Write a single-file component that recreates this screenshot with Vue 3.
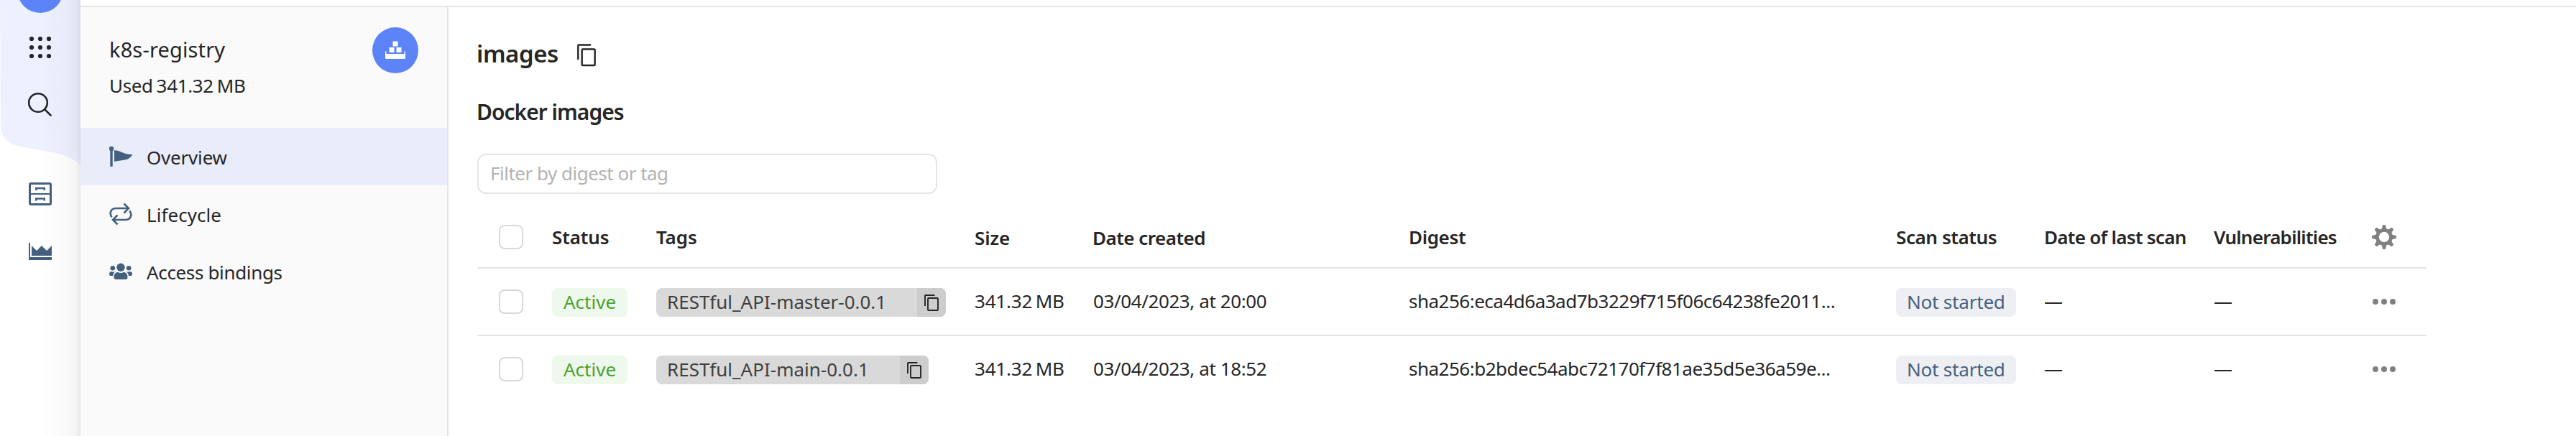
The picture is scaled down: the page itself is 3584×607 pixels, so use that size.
<script setup>
const nav = [
  { label: 'Overview', icon: 'flag', active: true },
  { label: 'Lifecycle', icon: 'cycle' },
  { label: 'Access bindings', icon: 'group' }
]
const rows = [
  { tag: 'RESTful_API-master-0.0.1', size: '341.32 MB', date: '03/04/2023, at 20:00', digest: 'sha256:eca4d6a3ad7b3229f715f06c64238fe2011...' },
  { tag: 'RESTful_API-main-0.0.1', size: '341.32 MB', date: '03/04/2023, at 18:52', digest: 'sha256:b2bdec54abc72170f7f81ae35d5e36a59e...' }
]
const teeth = [0, 45, 90, 135, 180, 225, 270, 315]
</script>

<template>
  <div class="app">
    <aside class="rail">
      <svg class="blob" width="112" height="240" viewBox="0 0 112 240">
        <path d="M0 0H112V229Q98 218 78 213L28 204Q3 199 1 177Z" fill="#edf1ff" />
        <circle cx="56" cy="-14" r="32" fill="#5c84f8" />
      </svg>
      <div class="rail-icons">
        <svg class="ri-grid" width="32" height="32" viewBox="40 50 32 32" fill="#262626">
          <template v-for="y in [54, 66, 78]" :key="y">
            <circle v-for="x in [44, 56, 68]" :key="x" :cx="x" :cy="y" r="3.1" />
          </template>
        </svg>
        <svg class="ri-search" width="36" height="36" viewBox="38 128 36 36" fill="none" stroke="#262626" stroke-width="2.6" stroke-linecap="round">
          <circle cx="53" cy="143" r="12.8" /><path d="M62.3 152.300L70.500 160.500" />
        </svg>
        <svg class="ri-drawer" width="32" height="32" viewBox="0 0 32 32" fill="none" stroke="#45607f" stroke-width="3">
          <rect x="1.500" y="1.500" width="29" height="29" rx="1.500" /><path d="M2 16H30" stroke-width="2.200" />
          <path d="M10.300 11V8H21.700V11M10.300 25.500V22.500H21.700V25.500" stroke-width="2.600" />
        </svg>
        <svg class="ri-chart" width="32" height="24" viewBox="0 0 32 24" fill="#45607f">
          <path d="M0 0H2V20H32V24H0ZM4 4L11 11L18 4L25 11L32 4V18H4Z" />
        </svg>
      </div>
      <div class="shade"></div>
    </aside>

    <div class="page">
      <div class="topbar"></div>
      <div class="body">
        <nav class="side">
          <div class="side-head">
            <div>
              <div class="reg">k8s-registry</div>
              <div class="used">Used 341.32 MB</div>
            </div>
            <div class="badge">
              <svg width="28" height="26" viewBox="0 0 28 26" fill="#fff">
                <path d="M10.500 0.500h7v7h-7zM5.500 9h7v7h-7zM15.500 9h7v7h-7zM0 14.500h1.500v3.500H26.500v-3.500H28v9a1.500 1.500 0 0 1-1.500 1.500h-25A1.500 1.500 0 0 1 0 23.500z" />
              </svg>
            </div>
          </div>
          <div v-for="n in nav" :key="n.label" class="item" :class="[n.icon, { active: n.active }]">
            <svg v-if="n.icon === 'flag'" width="32" height="32" viewBox="0 0 32 32" fill="#45607f">
              <circle cx="3" cy="5" r="3.200" /><path d="M1.300 5H4.700V29Q4.700 30 3.700 30H2.300Q1.300 30 1.300 29ZM7 7.200C17 7.500 20 13.500 32 13Q32.300 14 31 15.300C25 22.500 17 20.500 7 23Z" />
            </svg>
            <svg v-else-if="n.icon === 'cycle'" width="32" height="32" viewBox="0 0 32 32" fill="none" stroke="#45607f" stroke-width="2.600">
              <path d="M3.500 20.500C-0.500 14 2.500 8 9.500 8H27M20.500 1.500L27 8L20.500 14.500M28.500 11.500C32.500 18 29.500 24 22.500 24H5M11.500 17.500L5 24L11.500 30.500" />
            </svg>
            <svg v-else width="32" height="32" viewBox="0 0 32 32" fill="#45607f">
              <circle cx="16" cy="10.300" r="5.700" /><circle cx="4.800" cy="11.300" r="3.300" /><circle cx="27.200" cy="11.300" r="3.300" />
              <path d="M6.500 24C6.500 19 9 17 12 17Q16 19 20 17C23 17 25.500 19 25.500 24Q25.500 27 22.500 27H9.500Q6.500 27 6.500 24ZM0 20Q0 16 3 16Q5 17 8 16Q5.500 18.500 5 22H2Q0 22 0 20ZM32 20Q32 16 29 16Q27 17 24 16Q26.500 18.500 27 22H30Q32 22 32 20Z" />
            </svg>
            <span>{{ n.label }}</span>
          </div>
        </nav>

        <main class="main">
          <div class="title">
            <h1>images</h1>
            <svg width="26" height="32" viewBox="0 0 26 32" fill="none" stroke="#262626" stroke-width="2.400">
              <path d="M1.300 22V2.500Q1.300 1.500 2.300 1.500H19" /><rect x="6.700" y="7.500" width="18" height="22.500" rx="1" />
            </svg>
          </div>
          <h2>Docker images</h2>
          <div class="filter">Filter by digest or tag</div>

          <div class="table">
            <div class="row head">
              <div><i class="check"></i></div>
              <div>Status</div>
              <div>Tags</div>
              <div class="low">Size</div>
              <div class="low created">Date created</div>
              <div class="dig">Digest</div>
              <div class="scan">Scan status</div>
              <div class="last">Date of last scan</div>
              <div class="vuln">Vulnerabilities</div>
              <div>
                <svg class="gear" width="34" height="34" viewBox="-17 -17 34 34" fill="#808080">
                  <circle r="9.500" fill="none" stroke="#808080" stroke-width="4.600" />
                  <path v-for="a in teeth" :key="a" :transform="`rotate(${a})`" d="M-4.500 -10.500Q-2.600 -11.500 -2.300 -15.700Q-2.200 -17 -1 -17H1Q2.200 -17 2.300 -15.700Q2.600 -11.500 4.500 -10.500Z" />
                </svg>
              </div>
            </div>
            <div v-for="r in rows" :key="r.tag" class="row">
              <div><i class="check"></i></div>
              <div><span class="chip ok">Active</span></div>
              <div>
                <span class="tag">
                  <span class="tag-text">{{ r.tag }}</span>
                  <span class="tag-copy">
                    <svg width="20" height="24" viewBox="0 0 20 24" fill="none" stroke="#262626" stroke-width="1.900">
                      <path d="M1 17V2.500Q1 2 1.500 2H14.500" /><rect x="5" y="6" width="14" height="17" rx="1" />
                    </svg>
                  </span>
                </span>
              </div>
              <div class="size"><span>{{ r.size }}</span></div>
              <div class="date"><span>{{ r.date }}</span></div>
              <div class="digest"><span>{{ r.digest }}</span></div>
              <div><span class="chip idle">Not started</span></div>
              <div class="dash">—</div>
              <div class="dash">—</div>
              <div>
                <svg class="gear" width="34" height="12" viewBox="0 0 34 12" fill="#808080">
                  <circle cx="5" cy="6" r="4" /><circle cx="17" cy="6" r="4" /><circle cx="29" cy="6" r="4" />
                </svg>
              </div>
            </div>
          </div>
        </main>
      </div>
    </div>
  </div>
</template>

<style>
body { margin: 0; background: #fff; }
</style>

<style scoped>
.app { display: flex; width: 3584px; height: 607px; overflow: hidden; background: #fff; color: #262626; font: 26px/36px "Noto Sans", "Open Sans", sans-serif; }
svg { display: block; flex: none; }
.rail { position: relative; width: 112px; flex: none; }
.blob { position: absolute; left: 0; top: 0; }
.shade { position: absolute; inset: 0 0 0 auto; width: 56px; background: linear-gradient(90deg, rgba(0,0,0,0), rgba(0,0,0,.02) 60%, rgba(0,0,0,.045) 88%, rgba(0,0,0,.09)); }
.rail-icons { position: relative; display: flex; flex-direction: column; align-items: center; padding-top: 50px; }
.ri-search { margin-top: 46px; }
.ri-drawer { margin-top: 90px; }
.ri-chart { margin-top: 52px; }
.page { flex: 1; display: flex; flex-direction: column; min-width: 0; }
.topbar { height: 8px; border-bottom: 2px solid #e5e5e5; flex: none; }
.body { flex: 1; display: flex; }
.side { width: 510px; flex: none; background: #fafafa; border-right: 2px solid #e5e5e5; }
.side-head { height: 168px; box-sizing: border-box; padding: 28px 40px 0; display: flex; justify-content: space-between; }
.reg { font-size: 29px; line-height: 40px; margin-top: 11px; letter-spacing: .15px; white-space: nowrap; }
.used { line-height: 36px; margin-top: 12px; letter-spacing: -.35px; word-spacing: -1.5px; }
.badge { width: 64px; height: 64px; border-radius: 50%; background: #5c84f8; display: flex; align-items: center; justify-content: center; }
.item { height: 80px; display: flex; align-items: center; gap: 20px; padding-left: 40px; letter-spacing: -.2px; }
.item span { margin-top: 1px; }
.item.cycle { letter-spacing: .05px; }
.item.group { letter-spacing: -.35px; }
.item.active { background: #e9edfa; }
.main { padding-left: 40px; flex: 1; }
.title { display: flex; align-items: center; gap: 26px; height: 44px; margin-top: 45px; }
h1, h2 { margin: 0; font-weight: 600; margin-left: -1px; }
h1 { font-size: 33px; line-height: 42px; letter-spacing: -.45px; padding-bottom: 4px; width: 114px; }
h2 { font-size: 30px; line-height: 40px; margin-top: 37px; letter-spacing: -1px; }
.filter { box-sizing: border-box; width: 640px; height: 56px; margin-top: 38px; border: 2px solid #e5e5e5; border-radius: 12px; padding: 7px 16px; color: #b3b3b3; letter-spacing: -.5px; }
.table { width: 2712px; margin-top: 18px; }
.row { display: grid; grid-template-columns: 104px 145px 443px 164px 440px 678px 206px 236px 220px 76px; align-items: center; height: 92px; border-top: 2px solid #e5e5e5; white-space: nowrap; }
.row.head { height: 84px; border-top: 0; font-weight: 560; letter-spacing: -.1px; }
.check { display: block; width: 34px; height: 34px; box-sizing: border-box; border: 2px solid #d9d9d9; border-radius: 8px; margin-left: 30px; background: #fff; }
.low { padding-top: 2px; }
.row .created { letter-spacing: -.5px; }
.row .dig { letter-spacing: -.35px; }
.row .scan { letter-spacing: -.4px; }
.row .last { letter-spacing: -.7px; }
.row .vuln { letter-spacing: -.75px; }
.chip { display: inline-block; height: 40px; line-height: 38px; border-radius: 8px; padding: 0 16px; vertical-align: middle; }
.ok { color: #4ca22f; background: #eef8ec; }
.idle { color: #45607f; background: #edeff2; letter-spacing: -.2px; padding: 0 15px; }
.tag { display: inline-flex; height: 40px; border-radius: 8px; overflow: hidden; background: #d9d9d9; color: #404040; vertical-align: middle; line-height: 38px; }
.tag-text { padding: 0 43px 0 15px; }
.tag-copy { width: 40px; background: #cdcdcd; display: flex; align-items: center; justify-content: center; }
.size, .date, .digest, .dash { padding-bottom: 2px; }
.size { letter-spacing: -.2px; word-spacing: -2px; }
.date { letter-spacing: -.4px; padding-left: 1px; }
.digest { letter-spacing: -.5px; }
</style>
